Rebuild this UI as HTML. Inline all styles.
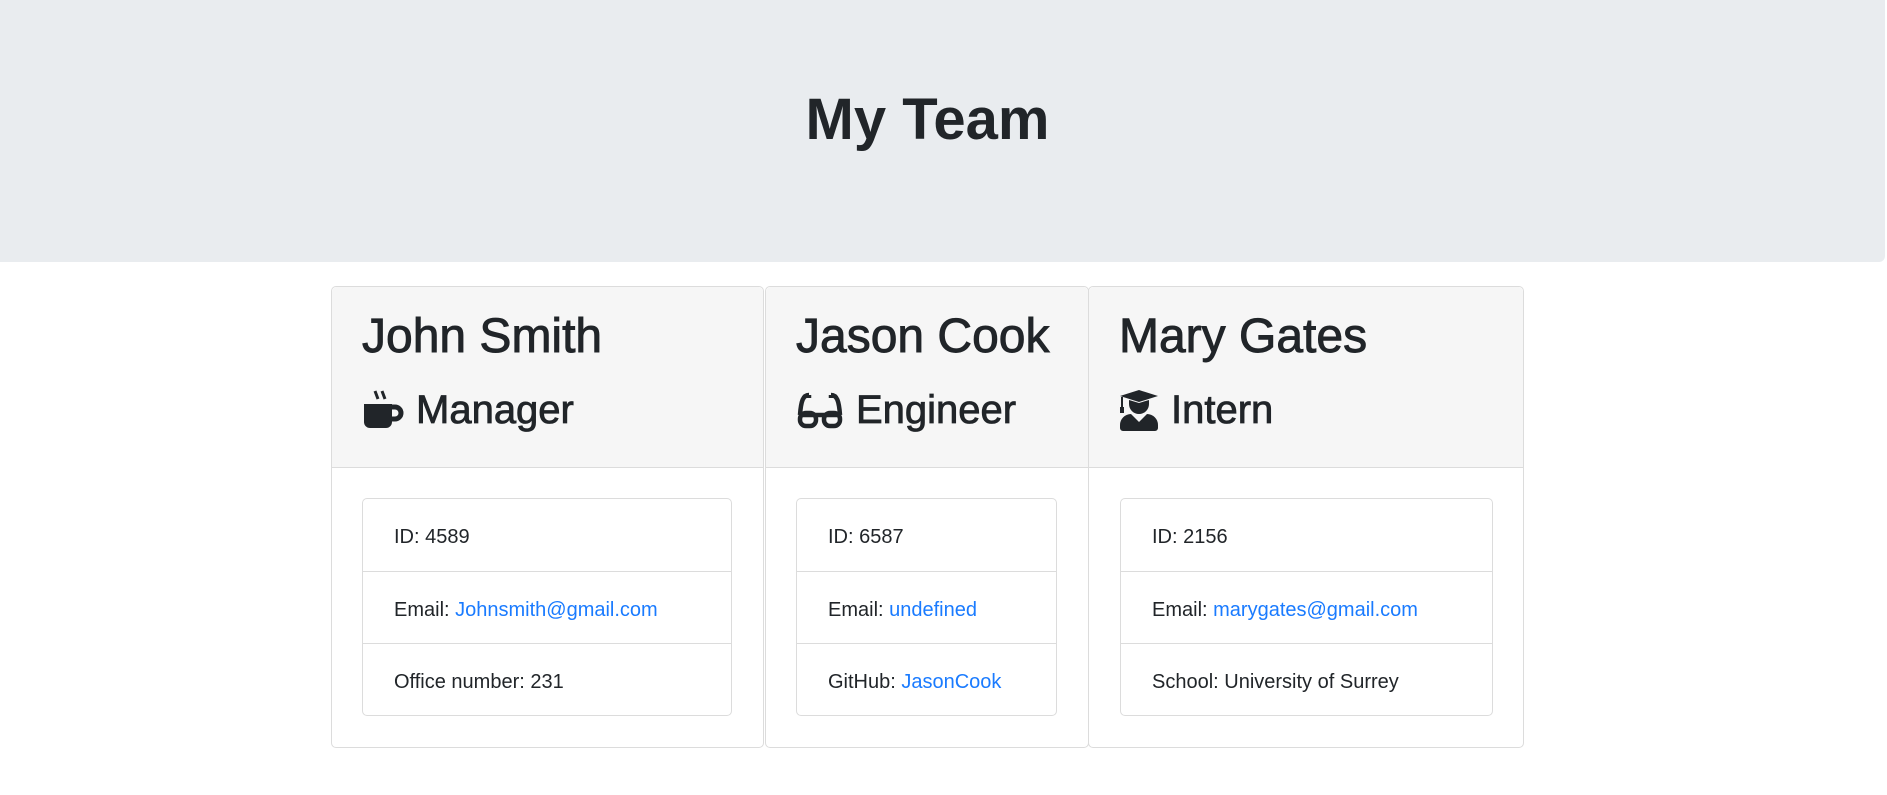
<!DOCTYPE html>
<html><head><meta charset="utf-8"><style>
*{box-sizing:border-box;margin:0;padding:0}
body{width:1887px;height:795px;background:#fff;font-family:"Liberation Sans",sans-serif;color:#212529;position:relative;overflow:hidden}
.jumbo{position:absolute;left:0;top:0;width:1885px;height:262px;background:#e9ecef;border-radius:0 0 6px 0}
.jumbo h1{position:absolute;left:0;width:1855px;top:85px;text-align:center;font-size:58px;font-weight:bold;line-height:70px}
.card{position:absolute;top:286px;height:462px;border:1px solid #dcdcdc;border-radius:5px;background:#fff}
.hd{height:181px;background:#f6f6f6;border-bottom:1px solid #dcdcdc;border-radius:5px 5px 0 0;position:relative}
.hd .n{position:absolute;left:30px;top:22px;font-size:48px;line-height:56px;white-space:nowrap;-webkit-text-stroke:0.9px #212529}
.hd .r{position:absolute;left:30px;top:100px;font-size:40px;line-height:46px;white-space:nowrap;display:flex;align-items:center;-webkit-text-stroke:0.8px #212529}
.hd .r svg{margin-right:12px}
.lg{position:absolute;left:30px;top:211px;border:1px solid #dcdcdc;border-radius:5px}
.lg div{height:72px;line-height:76px;padding-left:31px;font-size:20px;white-space:nowrap;border-top:1px solid #dcdcdc}
.lg div:first-child{border-top:none}
a{color:#1a7bff;text-decoration:none}
</style></head><body>
<div class="jumbo"><h1>My Team</h1></div>

<div class="card" style="left:331px;width:433px">
 <div class="hd"><div class="n">John Smith</div>
  <div class="r"><svg width="42" height="42" viewBox="0 0 42 42"><path d="M13 2l3 8M20 2l3 8" stroke="#212529" stroke-width="3"/><path d="M2 15h28v18a6 6 0 0 1-6 6H8a6 6 0 0 1-6-6z" fill="#212529"/><path d="M30 18h3a5 5 0 0 1 0 12h-3" fill="none" stroke="#212529" stroke-width="5"/></svg>Manager</div></div>
 <div class="lg" style="width:370px">
  <div>ID: 4589</div><div>Email: <a>Johnsmith@gmail.com</a></div><div>Office number: 231</div></div>
</div>

<div class="card" style="left:765px;width:324px">
 <div class="hd"><div class="n">Jason Cook</div>
  <div class="r"><svg width="48" height="42" viewBox="0 0 48 42"><g fill="none" stroke="#212529" stroke-width="4.5"><path d="M13 6c-6 0-8 6-9 20M35 6c6 0 8 6 9 20"/><path d="M4 26h40"/><rect x="4" y="24" width="16" height="13" rx="6"/><rect x="28" y="24" width="16" height="13" rx="6"/><path d="M13 6v3M35 6v3"/></g></svg>Engineer</div></div>
 <div class="lg" style="width:261px">
  <div>ID: 6587</div><div>Email: <a>undefined</a></div><div>GitHub: <a>JasonCook</a></div></div>
</div>

<div class="card" style="left:1088px;width:436px">
 <div class="hd"><div class="n">Mary Gates</div>
  <div class="r"><svg width="40" height="42" viewBox="0 0 40 42"><path d="M20 1L39 7 20 13 1 7z" fill="#212529"/><path d="M3 8v11" stroke="#212529" stroke-width="2"/><rect x="1" y="18" width="4" height="6" fill="#212529"/><path d="M10 11v4a10 10 0 0 0 20 0v-4l-10 3z" fill="#212529"/><path d="M1 36a11 11 0 0 1 11-11l8 8 8-8a11 11 0 0 1 11 11v3a3 3 0 0 1-3 3H4a3 3 0 0 1-3-3z" fill="#212529"/></svg>Intern</div></div>
 <div class="lg" style="left:31px;width:373px">
  <div>ID: 2156</div><div>Email: <a>marygates@gmail.com</a></div><div>School: University of Surrey</div></div>
</div>
</body></html>
